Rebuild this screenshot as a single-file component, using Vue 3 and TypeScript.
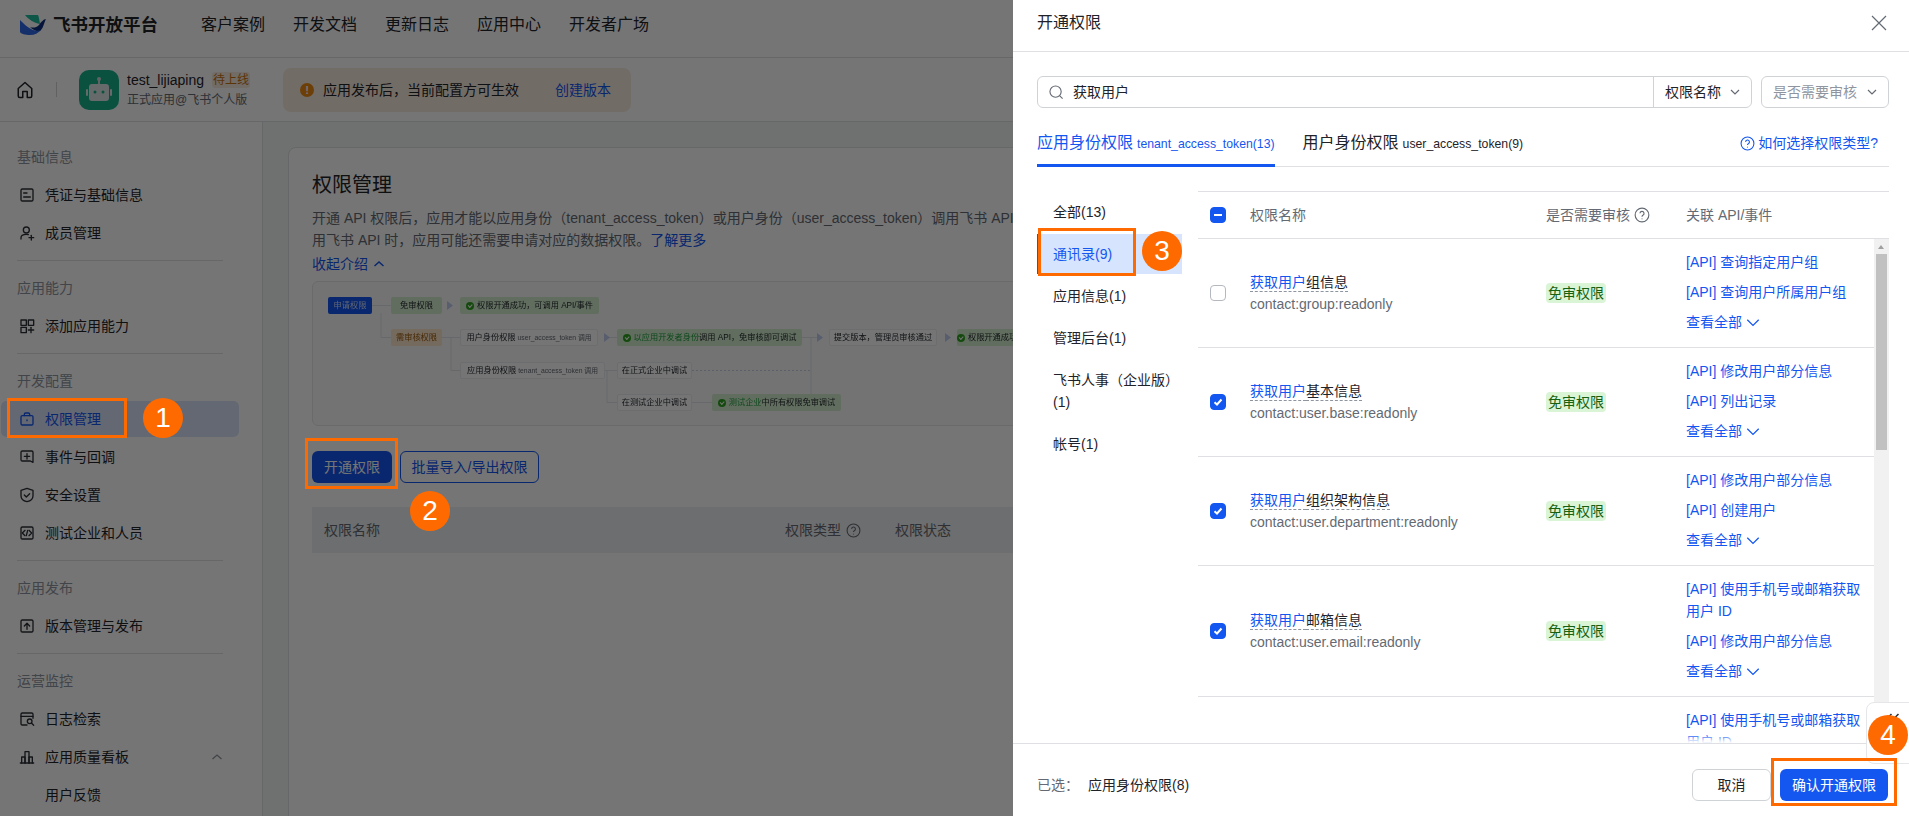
<script setup lang="ts">
interface NavItem { text: string; icon?: string[]; active?: boolean; chevron?: boolean }
interface NavGroup { label: string; items: NavItem[] }
interface DiagramNode { x: number; y: number; w: number; text: string; kind: string; lead?: string; small?: string; check?: boolean }
interface PermRow { suffix: string; scope: string; checked: boolean; links: string[]; partial?: boolean }

const topLinks: string[] = ['客户案例', '开发文档', '更新日志', '应用中心', '开发者广场']

const icons: Record<string, string[]> = {
  cred: ['M5 3h14a2 2 0 0 1 2 2v14a2 2 0 0 1-2 2H5a2 2 0 0 1-2-2V5a2 2 0 0 1 2-2z', 'M7 9h5', 'M7 15h10'],
  member: ['M11 12a4.5 4.5 0 1 0 0-9 4.5 4.5 0 0 0 0 9z', 'M3 21v-2c0-3 3-5 8-5 1 0 2 .1 3 .3', 'M15 19h7', 'M18.5 15.500v7'],
  add: ['M3 3h8v8H3z', 'M14 3h8v8h-8z', 'M3 14h8v8H3z', 'M18 14v8', 'M14 18h8'],
  perm: ['M5 7h14a2 2 0 0 1 2 2v10a2 2 0 0 1-2 2H5a2 2 0 0 1-2-2V9a2 2 0 0 1 2-2z', 'M8 7V5a2 2 0 0 1 2-2h4a2 2 0 0 1 2 2v2', 'M12 13.500v1'],
  event: ['M5 3h14a2 2 0 0 1 2 2v15l-4-2H5a2 2 0 0 1-2-2V5a2 2 0 0 1 2-2v0', 'M12 7v8', 'M8 11h8'],
  shield: ['M12 2l9 3v8c0 5-4 8-9 9-5-1-9-4-9-9V5z', 'M8 12l3 3 5-5'],
  test: ['M5 3h14a2 2 0 0 1 2 2v14a2 2 0 0 1-2 2H5a2 2 0 0 1-2-2V5a2 2 0 0 1 2-2z', 'M9 8l-4 4 4 4', 'M15 8l4 4-4 4', 'M13 8l-2 8'],
  version: ['M5 3h14a2 2 0 0 1 2 2v14a2 2 0 0 1-2 2H5a2 2 0 0 1-2-2V5a2 2 0 0 1 2-2z', 'M12 17V8', 'M8 12l4-4 4 4'],
  log: ['M21 11V5a2 2 0 0 0-2-2H5a2 2 0 0 0-2 2v14a2 2 0 0 0 2 2h7', 'M3 8h18', 'M16 19a3.500 3.500 0 1 0 0-7 3.500 3.500 0 0 0 0 7z', 'M19 18.500l3 3'],
  chart: ['M2 21h20', 'M4 21v-9h5v9', 'M9 21V4h6v17', 'M15 21v-9h5v9'],
}

const groups: NavGroup[] = [
  { label: '基础信息', items: [{ text: '凭证与基础信息', icon: icons.cred }, { text: '成员管理', icon: icons.member }] },
  { label: '应用能力', items: [{ text: '添加应用能力', icon: icons.add }] },
  {
    label: '开发配置',
    items: [
      { text: '权限管理', icon: icons.perm, active: true },
      { text: '事件与回调', icon: icons.event },
      { text: '安全设置', icon: icons.shield },
      { text: '测试企业和人员', icon: icons.test },
    ],
  },
  { label: '应用发布', items: [{ text: '版本管理与发布', icon: icons.version }] },
  {
    label: '运营监控',
    items: [
      { text: '日志检索', icon: icons.log },
      { text: '应用质量看板', icon: icons.chart, chevron: true },
      { text: '用户反馈' },
    ],
  },
]

const nodes: DiagramNode[] = [
  { x: 16, y: 16, w: 44, text: '申请权限', kind: 'blue' },
  { x: 79, y: 16, w: 51, text: '免审权限', kind: 'green' },
  { x: 148, y: 16, w: 139, text: '权限开通成功，可调用 API/事件', kind: 'green', check: true },
  { x: 79, y: 48, w: 51, text: '需审核权限', kind: 'orange' },
  { x: 148, y: 48, w: 138, text: '用户身份权限', small: ' user_access_token 调用', kind: 'plain' },
  { x: 305, y: 48, w: 185, lead: '以应用开发者身份', text: '调用 API，免审核即可调试', kind: 'green', check: true },
  { x: 517, y: 48, w: 108, text: '提交版本，管理员审核通过', kind: 'plain' },
  { x: 645, y: 48, w: 60, text: '权限开通成功', kind: 'green', check: true },
  { x: 148, y: 81, w: 145, text: '应用身份权限', small: ' tenant_access_token 调用', kind: 'plain' },
  { x: 305, y: 81, w: 75, text: '在正式企业中调试', kind: 'plain' },
  { x: 305, y: 113, w: 75, text: '在测试企业中调试', kind: 'plain' },
  { x: 400, y: 113, w: 129, lead: '测试企业', text: '中所有权限免审调试', kind: 'green', check: true },
]

const categories: string[] = ['全部(13)', '通讯录(9)', '应用信息(1)', '管理后台(1)', '飞书人事（企业版）(1)', '帐号(1)']

const rows: PermRow[] = [
  { suffix: '组信息', scope: 'contact:group:readonly', checked: false, links: ['[API] 查询指定用户组', '[API] 查询用户所属用户组'] },
  { suffix: '基本信息', scope: 'contact:user.base:readonly', checked: true, links: ['[API] 修改用户部分信息', '[API] 列出记录'] },
  { suffix: '组织架构信息', scope: 'contact:user.department:readonly', checked: true, links: ['[API] 修改用户部分信息', '[API] 创建用户'] },
  { suffix: '邮箱信息', scope: 'contact:user.email:readonly', checked: true, links: ['[API] 使用手机号或邮箱获取用户 ID', '[API] 修改用户部分信息'] },
  { suffix: '', scope: 'next', checked: true, partial: true, links: ['[API] 使用手机号或邮箱获取用户 ID'] },
]

function nodeBox(n: DiagramNode): Record<string, string> {
  return { left: `${n.x}px`, top: `${n.y}px`, width: `${n.w}px` }
}
</script>

<template>
  <div class="screen">
    <div class="page">
      <header class="topnav">
        <svg class="logo" viewBox="0 0 26 20" width="26" height="20">
          <path d="M5 0h13c1 2 1.500 6 2 9-6-1-12-5-15-9z" fill="#1fbd9e" />
          <path d="M26 4c-2 0-5 3-7 6-3 3-6 3-9 2 3 3 7 5 10 4 3-2 4-8 6-12z" fill="#0f2f80" />
          <path d="M0 5c3 3 8 8 13 10 3 1 6 1 8 0-3 3-6 5-11 5-5 0-9-1-10-3z" fill="#2f67e8" />
        </svg>
        <span class="brand">飞书开放平台</span>
        <nav class="toplinks">
          <span v-for="l in topLinks" :key="l">{{ l }}</span>
        </nav>
      </header>

      <div class="appbar">
        <svg class="home" viewBox="0 0 24 24" width="18" height="18" fill="none" stroke="currentColor" stroke-width="2" stroke-linejoin="round">
          <path d="M3 10l9-8 9 8v10a2 2 0 0 1-2 2h-4v-8H9v8H5a2 2 0 0 1-2-2z" />
        </svg>
        <span class="vline"></span>
        <div class="appicon">
          <svg viewBox="0 0 40 40" width="40" height="40">
            <path d="M20 9v5" stroke="#cfdad7" stroke-width="2" />
            <circle cx="20" cy="9" r="2" fill="#cfdad7" />
            <rect x="10" y="14" width="20" height="17" rx="3" fill="#dfe8e6" />
            <rect x="7" y="19" width="2" height="7" rx="1" fill="#dfe8e6" />
            <rect x="31" y="19" width="2" height="7" rx="1" fill="#dfe8e6" />
            <circle cx="16" cy="22" r="1.500" fill="#1ab08c" />
            <circle cx="24" cy="22" r="1.500" fill="#1ab08c" />
          </svg>
        </div>
        <div class="appinfo">
          <div class="appname"><span>test_lijiaping</span><em>待上线</em></div>
          <div class="appsub">正式应用@飞书个人版</div>
        </div>
        <div class="alert">
          <span class="alerticon">!</span>
          <span>应用发布后，当前配置方可生效</span>
          <a class="alertlink">创建版本</a>
        </div>
      </div>

      <div class="body">
        <aside class="sidebar">
          <section v-for="(g, gi) in groups" :key="g.label" class="group" :class="{ sep: gi > 0 }">
            <div class="grouplabel">{{ g.label }}</div>
            <div v-for="it in g.items" :key="it.text" class="navitem" :class="{ active: it.active }">
              <svg class="navicon" viewBox="0 0 24 24" width="16" height="16" fill="none" stroke="currentColor" stroke-width="2" stroke-linecap="round" stroke-linejoin="round">
                <path v-for="d in it.icon || []" :key="d" :d="d" />
              </svg>
              <span>{{ it.text }}</span>
              <svg v-if="it.chevron" class="navchev" viewBox="0 0 12 12" width="12" height="12" fill="none" stroke="currentColor" stroke-width="1.300">
                <path d="M1.500 8l4.500-4 4.500 4" />
              </svg>
            </div>
          </section>
        </aside>

        <main class="main">
          <div class="card">
            <h1 class="title">权限管理</h1>
            <p class="desc">开通 API 权限后，应用才能以应用身份（tenant_access_token）或用户身份（user_access_token）调用飞书 API。调</p>
            <p class="desc">用飞书 API 时，应用可能还需要申请对应的数据权限。<a class="link">了解更多</a></p>
            <p class="collapse">
              <span>收起介绍</span>
              <svg viewBox="0 0 12 12" width="12" height="12" fill="none" stroke="currentColor" stroke-width="1.500"><path d="M1.500 8l4.500-4 4.500 4" /></svg>
            </p>
            <div class="diagram">
              <svg class="wires" width="800" height="145" fill="none" stroke="#dfe3ea" stroke-width="1">
                <path d="M60 24.500h19M69 32v24.500h10M130 56.500h18M139 56.500v33h9M293 89.500h12M295 56.500h10M295 89.500v32h10M380 121.500h20M490 56.500h20M499 56.500v65M529 121.500h-30" />
                <path d="M380 89.500h118" stroke-dasharray="2 2" stroke="#c6cfe0" />
                <path d="M135 20l6 4.500-6 4.500zM292 52l6 4.500-6 4.500zM505 52l6 4.500-6 4.500zM633 52l6 4.500-6 4.500z" fill="#bfcdf0" stroke="none" />
              </svg>
              <div v-for="n in nodes" :key="n.text" class="dnode" :class="n.kind" :style="nodeBox(n)">
                <i v-if="n.check" class="dcheck"></i>
                <b v-if="n.lead">{{ n.lead }}</b>
                <span>{{ n.text }}</span>
                <small v-if="n.small">{{ n.small }}</small>
              </div>
            </div>
            <div class="actions">
              <button class="btn primary">开通权限</button>
              <button class="btn outline">批量导入/导出权限</button>
            </div>
            <div class="thead">
              <span class="th-name">权限名称</span>
              <span class="th-type">权限类型
                <svg viewBox="0 0 14 14" width="15" height="15" fill="none" stroke="currentColor" stroke-width="1"><circle cx="7" cy="7" r="6" /><path d="M5.200 5.500a1.800 1.800 0 1 1 2.600 1.700c-.6.300-.8.700-.8 1.300M7 10v.8" /></svg>
              </span>
              <span class="th-status">权限状态</span>
            </div>
          </div>
        </main>
      </div>
    </div>

    <div class="mask"></div>

    <div class="drawer">
      <div class="d-head">
        <span>开通权限</span>
        <svg viewBox="0 0 16 16" width="16" height="16" fill="none" stroke="#646a73" stroke-width="1.200"><path d="M1 1l14 14M15 1L1 15" /></svg>
      </div>

      <div class="filters">
        <div class="search">
          <div class="search-input">
            <svg viewBox="0 0 16 16" width="15" height="15" fill="none" stroke="#646a73" stroke-width="1.200"><circle cx="7" cy="7" r="6" /><path d="M11.500 11.500l3 3" /></svg>
            <span>获取用户</span>
          </div>
          <div class="search-select">
            <span>权限名称</span>
            <svg viewBox="0 0 12 12" width="12" height="12" fill="none" stroke="#646a73" stroke-width="1.200"><path d="M2 4l4 4 4-4" /></svg>
          </div>
        </div>
        <div class="audit">
          <span>是否需要审核</span>
          <svg viewBox="0 0 12 12" width="12" height="12" fill="none" stroke="#646a73" stroke-width="1.200"><path d="M2 4l4 4 4-4" /></svg>
        </div>
      </div>

      <div class="tabs">
        <div class="tab on">应用身份权限<small>tenant_access_token(13)</small></div>
        <div class="tab">用户身份权限<small>user_access_token(9)</small></div>
        <a class="howto">
          <svg viewBox="0 0 14 14" width="15" height="15" fill="none" stroke="currentColor" stroke-width="1"><circle cx="7" cy="7" r="6" /><path d="M5.200 5.500a1.800 1.800 0 1 1 2.600 1.700c-.6.300-.8.700-.8 1.300M7 10v.8" /></svg>
          <span>如何选择权限类型?</span>
        </a>
      </div>

      <div class="content">
        <ul class="cats">
          <li v-for="(c, i) in categories" :key="c" :class="{ sel: i === 1 }">{{ c }}</li>
        </ul>
        <div class="table">
          <div class="t-head">
            <span class="c-check"><i class="cb part"></i></span>
            <span class="c-name">权限名称</span>
            <span class="c-audit">是否需要审核
              <svg viewBox="0 0 14 14" width="16" height="16" fill="none" stroke="currentColor" stroke-width="1"><circle cx="7" cy="7" r="6" /><path d="M5.200 5.500a1.800 1.800 0 1 1 2.600 1.700c-.6.300-.8.700-.8 1.300M7 10v.8" /></svg>
            </span>
            <span class="c-ref">关联 API/事件</span>
          </div>
          <div class="t-body">
            <div class="t-rows">
              <div v-for="r in rows" :key="r.scope" class="t-row" :class="{ cutoff: r.partial }">
                <span class="c-check">
                  <i v-if="!r.partial" class="cb" :class="{ on: r.checked }">
                    <svg v-if="r.checked" viewBox="0 0 12 12" width="12" height="12" fill="none" stroke="#fff" stroke-width="2"><path d="M2.500 6.200l2.500 2.300 4.500-5" /></svg>
                  </i>
                </span>
                <div class="c-name">
                  <template v-if="!r.partial">
                    <div class="p-title"><em>获取用户</em>{{ r.suffix }}</div>
                    <div class="p-scope">{{ r.scope }}</div>
                  </template>
                </div>
                <span class="c-audit"><span v-if="!r.partial" class="tag">免审权限</span></span>
                <div class="c-ref links">
                  <a v-for="l in r.links" :key="l">{{ l }}</a>
                  <a v-if="!r.partial" class="more">查看全部
                    <svg viewBox="0 0 14 14" width="16" height="16" fill="none" stroke="currentColor" stroke-width="1.100"><path d="M2 5l5 5 5-5" /></svg>
                  </a>
                </div>
              </div>
            </div>
            <div class="scrollbar">
              <i class="sb-arrow"></i>
              <i class="sb-thumb"></i>
            </div>
          </div>
        </div>
      </div>

      <footer class="d-foot">
        <span class="picked-l">已选：</span>
        <span class="picked">应用身份权限(8)</span>
        <button class="btn cancel">取消</button>
        <button class="btn confirm">确认开通权限</button>
      </footer>
    </div>

    <div class="floattab">
      <svg viewBox="0 0 16 14" width="16" height="14" fill="none" stroke="#2b2f36" stroke-width="1.500"><path d="M7.500 1L1.500 7l6 6M14.500 1l-6 6 6 6" /></svg>
    </div>

    <i class="box box1"></i>
    <i class="box box2"></i>
    <i class="box box3"></i>
    <i class="box box4"></i>
    <b class="dot dot1">1</b>
    <b class="dot dot2">2</b>
    <b class="dot dot3">3</b>
    <b class="dot dot4">4</b>
  </div>
</template>

<style>
html, body { margin: 0; overflow: hidden; background: #fff; }
</style>

<style scoped>
.screen {
  position: relative;
  width: 1909px;
  height: 816px;
  overflow: hidden;
  font-family: "Liberation Sans", "Noto Sans CJK SC", sans-serif;
  font-size: 14px;
  line-height: 22px;
  color: #1f2329;
}
i, em { font-style: normal; }
p, h1, ul { margin: 0; padding: 0; }
li { list-style: none; }
.page { width: 100%; height: 100%; display: flex; flex-direction: column; background: #fff; }

.topnav { height: 58px; flex: none; box-sizing: border-box; border-bottom: 1px solid #dee0e3; display: flex; align-items: center; padding: 0 0 7px 20px; }
.logo { flex: none; }
.brand { margin-left: 7px; font-size: 17.500px; font-weight: 700; color: #1f2329; }
.toplinks { margin-left: 43px; display: flex; gap: 28px; font-size: 16px; }

.appbar { height: 64px; flex: none; box-sizing: border-box; border-bottom: 1px solid #dee0e3; display: flex; align-items: center; padding-left: 16px; }
.home { flex: none; color: #1f2329; }
.vline { width: 1px; height: 15px; background: #d0d3d6; margin: 0 22px; }
.appicon { width: 40px; height: 40px; border-radius: 10px; background: #1ab08c; flex: none; overflow: hidden; }
.appicon svg { display: block; }
.appinfo { width: 123px; margin-left: 8px; flex: none; }
.appname { display: flex; align-items: center; gap: 8px; height: 20px; }
.appname em { font-size: 12px; line-height: 16px; width: 38px; text-align: center; border-radius: 3px; background: #f8ece0; color: #c8710f; }
.appsub { font-size: 12px; line-height: 20px; color: #646a73; }
.alert { margin-left: 33px; width: 348px; height: 44px; box-sizing: border-box; padding-left: 17px; border-radius: 8px; background: #f8ece0; display: flex; align-items: center; flex: none; }
.alerticon { width: 14px; height: 14px; border-radius: 50%; background: #ed8a12; color: #fff; font-size: 11px; line-height: 14px; text-align: center; font-weight: 700; margin-right: 9px; }
.alertlink { margin-left: 36px; color: #1456f0; }

.body { flex: 1; min-height: 0; display: flex; }
.sidebar { width: 263px; flex: none; box-sizing: border-box; border-right: 1px solid #dee0e3; padding: 16px 0 0 1px; overflow: hidden; background: #fff; }
.group { width: 238px; }
.group.sep { margin-top: 8px; position: relative; padding-top: 9px; }
.group.sep::before { content: ""; position: absolute; top: 0; left: 16px; right: 16px; height: 1px; background: #dee0e3; }
.grouplabel { height: 38px; line-height: 38px; padding-left: 16px; color: #8f959e; }
.navitem { height: 38px; box-sizing: border-box; border-top: 1px solid transparent; border-bottom: 1px solid transparent; background-clip: padding-box; display: flex; align-items: center; padding-left: 18px; border-radius: 6px; }
.navicon { flex: none; margin-right: 10px; color: #2b2f36; }
.navitem.active { background-color: #d7e2fb; color: #1456f0; }
.navitem.active .navicon { color: #1456f0; }
.navchev { margin-left: auto; margin-right: 16px; color: #8f959e; }

.main { flex: 1; min-width: 0; padding: 25px 0 0 25px; background: #f2f3f3; overflow: hidden; }
.card { min-height: 800px; width: 1500px; box-sizing: border-box; padding: 24px 23px; background: #fff; border: 1px solid #dee0e3; border-radius: 8px; }
.title { font-size: 20px; line-height: 26px; font-weight: 400; margin-bottom: 9px; }
.desc { color: #646a73; white-space: nowrap; }
.link { color: #1456f0; }
.collapse { margin-top: 2px; color: #1456f0; display: flex; align-items: center; gap: 5px; }
.diagram { position: relative; margin-top: 6px; height: 145px; box-sizing: border-box; border: 1px solid #e4e6e9; border-radius: 6px; background: #fafbfc; filter: blur(0.35px); overflow: hidden; }
.wires { position: absolute; left: -1px; top: -1px; }
.dnode { position: absolute; margin: -1px 0 0 -1px; height: 17px; box-sizing: border-box; font-size: 8.200px; line-height: 17px; white-space: nowrap; overflow: hidden; text-align: center; border-radius: 2px; display: flex; align-items: center; justify-content: center; gap: 0; }
.dnode.blue { background: #1456f0; color: #cfdcfb; }
.dnode.green { background: #d4efcf; color: #1f2329; }
.dnode.green b { font-weight: 400; color: #1f9e3d; }
.dnode.orange { background: #fde6cb; color: #9c5a0c; }
.dnode.plain { background: #fff; border: 1px solid #eceef1; color: #1f2329; }
.dnode small { font-size: 6.800px; color: #646a73; margin-left: 2px; }
.dcheck { width: 8px; height: 8px; border-radius: 50%; background: #2ea121; margin-right: 3px; flex: none; position: relative; }
.dcheck::after { content: ""; position: absolute; left: 2px; top: 2px; width: 3px; height: 1.500px; border-left: 1px solid #fff; border-bottom: 1px solid #fff; transform: rotate(-45deg); }
.actions { display: flex; gap: 8px; margin-top: 25px; }
.btn { font-family: inherit; font-size: 14px; line-height: 22px; height: 32px; padding: 0; border-radius: 6px; border: 1px solid transparent; box-sizing: border-box; }
.btn.primary { width: 80px; background: #1456f0; color: #fff; }
.btn.outline { width: 139px; background: #fff; border-color: #1456f0; color: #1456f0; }
.thead { margin-top: 24px; height: 46px; display: flex; align-items: center; background: #eeeff1; color: #646a73; }
.th-name { margin-left: 12px; width: 461px; }
.th-type { display: flex; align-items: center; gap: 5px; width: 110px; }

.mask { position: absolute; inset: 0; background: rgba(0, 0, 0, 0.54); }

.drawer { position: absolute; top: 0; right: 0; bottom: 0; width: 896px; background: #fff; display: flex; flex-direction: column; overflow: hidden; }
.d-head { height: 52px; flex: none; box-sizing: border-box; border-bottom: 1px solid #dee0e3; padding: 0 22px 6px 24px; display: flex; align-items: center; justify-content: space-between; font-size: 16px; }
.filters { margin: 24px 20px 0 24px; display: flex; gap: 9px; height: 32px; flex: none; }
.search { flex: 1; display: flex; border: 1px solid #d0d3d6; border-radius: 6px; box-sizing: border-box; }
.search-input { flex: 1; display: flex; align-items: center; gap: 9px; padding-left: 11px; }
.search-select { width: 98px; box-sizing: border-box; border-left: 1px solid #d0d3d6; display: flex; align-items: center; justify-content: space-between; padding: 0 10px 0 11px; }
.audit { width: 128px; box-sizing: border-box; border: 1px solid #d0d3d6; border-radius: 6px; display: flex; align-items: center; justify-content: space-between; padding: 0 10px 0 11px; color: #8f959e; }

.tabs { margin: 16px 20px 0 24px; height: 43px; flex: none; box-sizing: border-box; border-bottom: 1px solid #dee0e3; display: flex; gap: 28px; position: relative; }
.tab { font-size: 16px; line-height: 38px; height: 43px; box-sizing: border-box; white-space: nowrap; }
.tab small { font-size: 12.250px; margin-left: 4px; }
.tab.on { color: #1456f0; border-bottom: 3px solid #1456f0; }
.howto { margin-left: auto; margin-right: 11px; margin-top: 8px; display: flex; align-items: center; height: 22px; gap: 3px; color: #1456f0; font-size: 14px; }

.content { flex: 1; min-height: 0; margin: 24px 20px 0 24px; display: flex; gap: 16px; }
.cats { width: 145px; flex: none; padding-top: 1px; }
.cats li { padding: 9px 0 9px 16px; margin-bottom: 2px; box-sizing: border-box; }
.cats li.sel { background: #d6e4fd; color: #1456f0; border-left: 2px solid #1456f0; padding-left: 14px; }
.table { flex: 1; min-width: 0; display: flex; flex-direction: column; }
.t-head { height: 48px; flex: none; box-sizing: border-box; border-top: 1px solid #dee0e3; border-bottom: 1px solid #dee0e3; display: flex; align-items: center; color: #646a73; }
.c-check { width: 52px; flex: none; padding-left: 12px; box-sizing: border-box; display: flex; align-items: center; }
.c-name { width: 296px; flex: none; }
.c-audit { width: 140px; flex: none; display: flex; align-items: center; gap: 4px; }
.c-ref { flex: 1; min-width: 0; }
.t-body { flex: 1; min-height: 0; display: flex; }
.t-rows { flex: 1; min-width: 0; overflow: hidden; }
.t-row { display: flex; align-items: center; padding: 12px 7px 14px 0; border-bottom: 1px solid #dee0e3; }
.t-row > .c-check, .t-row > .c-name, .t-row > .c-audit { margin-top: 2px; }
.t-row.cutoff { align-items: flex-start; border-bottom: 0; }
.cb { width: 16px; height: 16px; box-sizing: border-box; border: 1px solid #b4b8bf; border-radius: 4px; display: flex; align-items: center; justify-content: center; background: #fff; }
.cb.on { background: #1456f0; border-color: #1456f0; }
.cb.part { background: #1456f0; border-color: #1456f0; }
.cb.part::after { content: ""; width: 8px; height: 2px; background: #fff; }
.p-title { white-space: nowrap; text-decoration: underline dashed #8f959e 1px; text-underline-offset: 4px; width: max-content; }
.p-title em { color: #1456f0; }
.p-scope { color: #646a73; }
.tag { width: 60px; height: 20px; line-height: 20px; text-align: center; border-radius: 4px; background: #d9f5d6; color: #186010; }
.links { display: flex; flex-direction: column; gap: 8px; }
.links a { color: #1456f0; }
.links .more { display: flex; align-items: center; gap: 3px; }
.scrollbar { width: 15px; flex: none; background: #f1f1f1; position: relative; }
.sb-arrow { position: absolute; left: 4px; top: 6px; width: 0; height: 0; border-left: 3.500px solid transparent; border-right: 3.500px solid transparent; border-bottom: 4px solid #a0a0a0; }
.sb-thumb { position: absolute; left: 2px; top: 15px; width: 11px; height: 196px; background: #c1c1c1; }

.d-foot { height: 73px; flex: none; box-sizing: border-box; border-top: 1px solid #dee0e3; padding: 9px 21px 0 24px; background: #fff; display: flex; align-items: center; box-shadow: 0 -5px 6px #fff; position: relative; }
.picked-l { color: #646a73; width: 51px; }
.picked { margin-right: auto; }
.btn.cancel { width: 79px; background: #fff; border-color: #d0d3d6; color: #1f2329; margin-right: 9px; }
.btn.confirm { width: 108px; background: #1456f0; color: #fff; }

.floattab { position: absolute; left: 1866px; top: 702px; width: 60px; height: 62px; box-sizing: border-box; background: #fff; border: 1px solid #e4e6e9; border-radius: 8px; padding: 10px 0 0 17px; }
.floattab svg { display: block; }

.box { position: absolute; box-sizing: border-box; border: 3px solid #ff6a00; }
.box1 { left: 7px; top: 398px; width: 120px; height: 40px; }
.box2 { left: 305px; top: 438px; width: 93px; height: 51px; }
.box3 { left: 1038px; top: 228px; width: 98px; height: 48px; }
.box4 { left: 1771px; top: 758px; width: 126px; height: 48px; }
.dot { position: absolute; width: 40px; height: 40px; border-radius: 50%; background: #ff6a00; color: #fff; font-size: 28px; line-height: 40px; font-weight: 400; text-align: center; }
.dot1 { left: 143px; top: 398px; }
.dot2 { left: 410px; top: 491px; }
.dot3 { left: 1142px; top: 231px; }
.dot4 { left: 1868px; top: 715px; }
</style>
